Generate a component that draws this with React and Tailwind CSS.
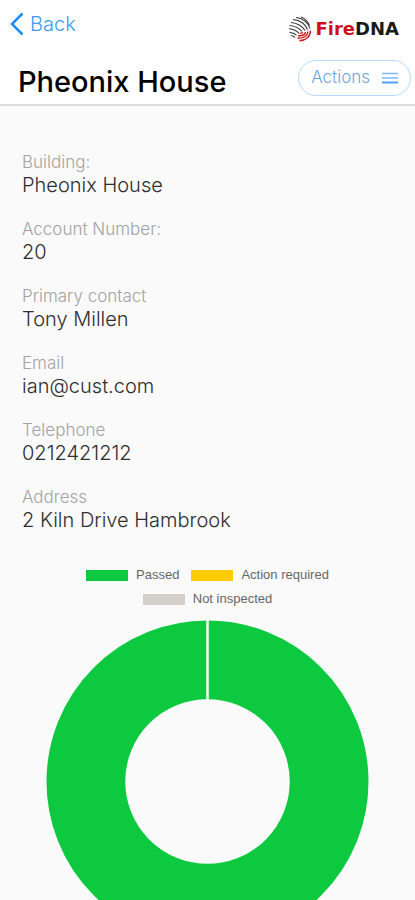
const details = [
  { label: 'Building:', value: 'Pheonix House' },
  { label: 'Account Number:', value: '20' },
  { label: 'Primary contact', value: 'Tony Millen' },
  { label: 'Email', value: 'ian@cust.com' },
  { label: 'Telephone', value: '0212421212' },
  { label: 'Address', value: '2 Kiln Drive Hambrook' },
];

const legend = [
  { label: 'Passed', color: 'bg-[#0dc93f]' },
  { label: 'Action required', color: 'bg-[#ffcc00]' },
  { label: 'Not inspected', color: 'bg-[#d4cfc8]' },
];

const Logo = () => (
  <div className="flex items-center gap-1">
    <svg className="w-6 h-[26px]" viewBox="0 0 24 26" fill="none" strokeWidth="1.1" aria-hidden="true">
      <g stroke="#333">
        <path d="M13 1c4 1.500 7 4.500 8.500 8.500" />
        <path d="M8 1.500c6.500.5 12 5 14 11" />
        <path d="M5 3.500c7 .5 13 5 14.500 10" />
        <path d="M3 6.500c6.500.5 12 4 14 8" />
        <path d="M1.500 9.500c6 .5 10 3 12.500 6" />
        <path d="M1 12.800c4.500.5 8 2.200 10 4.500" />
        <path d="M1.500 16.200c3 .3 5 1.300 7 3" />
        <path d="M3 19.500c1.500.2 3 1 4 2" />
      </g>
      <g stroke="#d01c22" strokeWidth="1.400">
        <path d="M22.500 14.500c0 6-4.500 10-11 10.300" />
        <path d="M20 15.500c-.5 4.200-4.500 6.800-10.500 6.700" />
        <path d="M17.500 16c-.5 2.500-3.500 4-7.500 3.700" />
        <path d="M14.800 16.200c-.5 1-1.500 1.200-3 1.200" />
      </g>
    </svg>
    <span className="font-['DejaVu_Sans',sans-serif] text-lg leading-6 font-bold text-[#1a1a1a]">
      <span className="text-[#cc1218]">Fire</span>DNA
    </span>
  </div>
);

const Header = () => (
  <header className="shrink-0 bg-white border-b-2 border-[#dcdcdc]">
    <div className="flex items-start justify-between h-14 pl-2.5 pr-4">
      <a href="#back" className="flex items-center gap-1.5 h-12 text-xl text-[#3b9cf5]">
        <svg className="w-3.5 h-6" viewBox="0 0 14 24" fill="none" aria-hidden="true">
          <path d="M12.500 1.500L2 12l10.500 10.500" stroke="#1b8cf8" strokeWidth="2.500" />
        </svg>
        <span className="font-light">Back</span>
      </a>
      <div className="pt-4">
        <Logo />
      </div>
    </div>
    <div className="flex items-start justify-between h-12 pl-[18px] pr-1">
      <h1 className="pt-2 text-[29px] leading-9 font-medium text-black">Pheonix House</h1>
      <button
        type="button"
        className="flex items-center gap-3 h-9 mt-1 px-3 rounded-full border border-[#b5d8fb] text-[17px] text-[#6ba4e4]"
      >
        <span className="font-light">Actions</span>
        <svg className="w-4 h-3" viewBox="0 0 16 12" fill="none" aria-hidden="true">
          <path d="M0 1.500h16M0 6h16" stroke="#78b9f5" strokeWidth="1.500" />
          <path d="M0 10.500h16" stroke="#4aa5f8" strokeWidth="2" />
        </svg>
      </button>
    </div>
  </header>
);

const InspectionChart = () => (
  <section className="pt-8 font-['Liberation_Sans',sans-serif]">
    <ul className="flex flex-wrap justify-center gap-x-3 gap-y-1 px-10 text-[13px] leading-5 text-[#666]">
      {legend.map((item) => (
        <li key={item.label} className="flex items-center gap-2">
          <span className={`w-[42px] h-[11px] ${item.color}`} />
          {item.label}
        </li>
      ))}
    </ul>
    <div className="px-6 pt-[11px] pb-8">
      <svg className="w-full" viewBox="0 0 324 324" role="img" aria-label="All items passed">
        <circle cx="162" cy="162" r="122" fill="none" stroke="#0dc93f" strokeWidth="79" />
        <path d="M162 0v81" stroke="#fff" strokeWidth="2.500" />
      </svg>
    </div>
  </section>
);

const App = () => {
  return (
    <div className="flex flex-col h-dvh overflow-hidden bg-[#fafafa] font-['Inter',sans-serif]">
      <Header />
      <main className="flex-1 overflow-y-auto [scrollbar-width:none] px-[22px] pt-[45px]">
        <dl className="flex flex-col gap-5">
          {details.map((item) => (
            <div key={item.label}>
              <dt className="text-[17px] leading-[22px] font-light text-[#a3a3a3]">{item.label}</dt>
              <dd className="text-xl leading-[25px] font-light text-[#2e2e2e]">{item.value}</dd>
            </div>
          ))}
        </dl>
        <InspectionChart />
      </main>
    </div>
  );
};

export default App;
